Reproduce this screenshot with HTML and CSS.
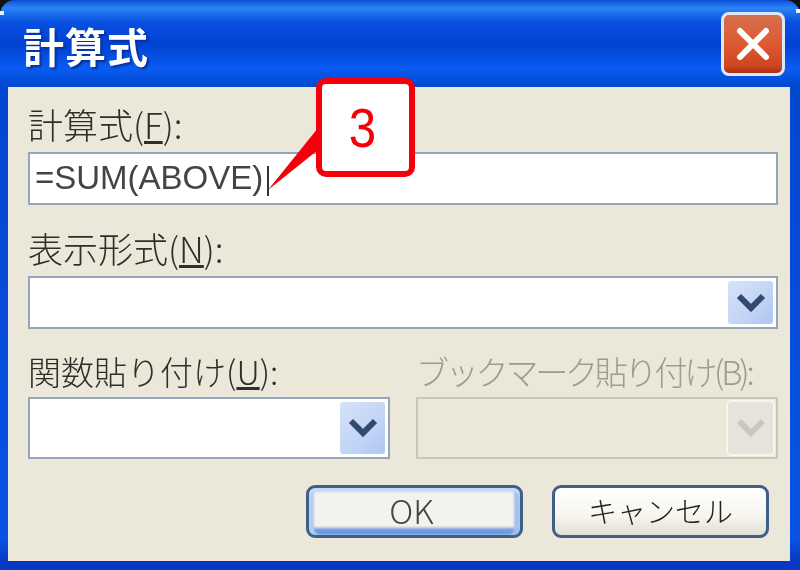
FILE: index.html
```html
<!DOCTYPE html>
<html lang="ja">
<head>
    <meta charset="UTF-8">
    <meta name="viewport" content="width=device-width, initial-scale=1.0">
    <title>計算式</title>
    <link rel="stylesheet" href="styles.css">
</head>
<body>
    <div class="window">
        <div class="titlebar">
            <span class="title">計算式</span>
            <button class="close-button" aria-label="閉じる">
                <svg width="40" height="40" viewBox="0 0 40 40">
                    <path d="M7 7 L33 33 M33 7 L7 33" stroke="#fff" stroke-width="6" stroke-linecap="round" fill="none"/>
                </svg>
            </button>
        </div>

        <div class="client">
            <div class="group formula-group">
                <label class="field-label">計算式(<u>F</u>):</label>
                <div class="field text-field">=SUM(ABOVE)<span class="caret"></span></div>
            </div>

            <div class="group format-group">
                <label class="field-label">表示形式(<u>N</u>):</label>
                <div class="field select-field">
                    <span class="drop-button">
                        <svg width="30" height="20" viewBox="0 0 30 20"><path d="M3 3 L15 15 L27 3" stroke="#34496f" stroke-width="6" fill="none"/></svg>
                    </span>
                </div>
            </div>

            <div class="paste-row">
                <div class="group">
                    <label class="field-label tight">関数貼り付け(<u>U</u>):</label>
                    <div class="field select-field tall">
                        <span class="drop-button">
                            <svg width="30" height="20" viewBox="0 0 30 20"><path d="M3 3 L15 15 L27 3" stroke="#34496f" stroke-width="6" fill="none"/></svg>
                        </span>
                    </div>
                </div>
                <div class="group disabled">
                    <label class="field-label tight">ブックマーク貼り付け(B):</label>
                    <div class="field select-field tall">
                        <span class="drop-button">
                            <svg width="30" height="20" viewBox="0 0 30 20"><path d="M3 3 L15 15 L27 3" stroke="#c9c8be" stroke-width="6" fill="none"/></svg>
                        </span>
                    </div>
                </div>
            </div>

            <div class="button-row">
                <button class="push-button default-button">OK</button>
                <button class="push-button cancel-button">キャンセル</button>
            </div>
        </div>

        <!-- callout marker over the dialog -->
        <div class="callout">
            <svg class="callout-tail" width="60" height="80" viewBox="0 0 60 80">
                <path d="M50 8 L0 70 L50 30 Z" fill="#f5000a"/>
            </svg>
            <span class="callout-number">3</span>
        </div>
    </div>
</body>
</html>
```

FILE: styles.css
```css
html, body {
    margin: 0;
    padding: 0;
}

body {
    width: 800px;
    height: 570px;
    overflow: hidden;
    background-color: #111;
    font-family: "Noto Sans CJK JP", "Liberation Sans", sans-serif;
}

/* the little white specks left in the window corners */
body::before, body::after {
    content: "";
    position: absolute;
    z-index: 1;
    width: 4px;
    height: 4px;
    background-color: #e8eefa;
}

body::before {
    left: 0;
    top: 11px;
}

body::after {
    right: 0;
    top: 9px;
}

.window {
    position: relative;
    width: 800px;
    height: 570px;
    display: flex;
    flex-direction: column;
    border-radius: 15px 15px 0 0;
    background: linear-gradient(to bottom, #0a50d8 0, #2d84f6 8px, #0850e0 22px, #0042d2 45px, #0a5cf2 68px, #0048d0 86px, #0a52e4 540px, #0838c0 562px);
    overflow: hidden;
}

.titlebar {
    height: 87px;
    flex-shrink: 0;
    display: flex;
    align-items: center;
    justify-content: space-between;
    padding: 0 15px 0 23px;
    box-sizing: border-box;
}

.title {
    color: #fff;
    font-size: 41px;
    font-weight: 700;
    letter-spacing: 1px;
    text-shadow: 2px 2px 2px #06309a;
    filter: blur(0.6px);
    padding-top: 2px;
}

.close-button {
    width: 64px;
    height: 64px;
    padding: 0;
    border: 3px solid #dfe6f6;
    border-radius: 8px;
    background: linear-gradient(to bottom, #d4704e 0%, #de5a30 50%, #cc4520 88%, #a83010 100%);
    display: flex;
    align-items: center;
    justify-content: center;
    filter: blur(0.6px);
}

.client {
    flex: 1;
    margin: 0 10px 9px 8px;
    padding: 18px 12px 22px 20px;
    background-color: #ebe8d9;
    display: flex;
    flex-direction: column;
}

.field-label {
    display: block;
    height: 38px;
    margin-bottom: 9px;
    font-size: 35px;
    font-weight: 300;
    line-height: 38px;
    color: #2e2e2a;
    white-space: nowrap;
    filter: blur(0.4px);
}

.field-label.tight {
    margin-bottom: 7px;
    font-size: 33px;
}

.field {
    position: relative;
    box-sizing: border-box;
    height: 53px;
    border: 2px solid #93a6ba;
    background-color: #fff;
}

.text-field {
    padding-left: 5px;
    font-family: "Liberation Sans", sans-serif;
    font-size: 33px;
    line-height: 47px;
    color: #444;
    filter: blur(0.4px);
}

.caret {
    display: inline-block;
    width: 2px;
    height: 30px;
    margin-left: 4px;
    background-color: #333;
    vertical-align: -7px;
}

.formula-group {
    margin-bottom: 24px;
}

.format-group {
    margin-bottom: 23px;
}

.select-field.tall {
    height: 62px;
}

.drop-button {
    position: absolute;
    top: 3px;
    right: 3px;
    bottom: 3px;
    width: 45px;
    display: flex;
    align-items: center;
    justify-content: center;
    border-radius: 3px;
    background: linear-gradient(135deg, #d6e2f8 0%, #c2d4f6 60%, #aec6f2 100%);
    filter: blur(0.4px);
}

.paste-row {
    display: grid;
    grid-template-columns: 362px 362px;
    column-gap: 26px;
}

.disabled .field-label {
    color: #a09c8c;
    letter-spacing: -3.2px;
}

.disabled .field {
    border-color: #c9c7ba;
    background-color: #ebe8d9;
}

.disabled .drop-button {
    background: #e6e4da;
    box-shadow: 0 0 0 2px #f6f5ef;
}

.button-row {
    display: flex;
    justify-content: flex-end;
    gap: 29px;
    margin-top: 26px;
    margin-right: 9px;
}

.push-button {
    box-sizing: border-box;
    width: 217px;
    height: 53px;
    padding: 0 0 3px;
    border: 3px solid #3f5f86;
    border-radius: 9px;
    background: linear-gradient(to bottom, #ffffff 0%, #f6f5ee 60%, #e2dfd2 100%);
    font-family: "Noto Sans CJK JP", "Liberation Sans", sans-serif;
    font-size: 29px;
    font-weight: 300;
    line-height: 44px;
    color: #222;
    filter: blur(0.5px);
}

.default-button {
    padding: 0 6px 6px 0;
    background: #f3f2ec;
    font-size: 33px;
    color: #444;
    box-shadow: inset 0 4px 2px #c4daf8, inset 5px 0 2px #b4cdf2, inset -6px 0 2px #a4c0ee, inset 0 -7px 3px #6e9ae0;
}

.callout {
    position: absolute;
    left: 316px;
    top: 78px;
    width: 99px;
    height: 99px;
    box-sizing: border-box;
    border: 6px solid #f5000a;
    border-radius: 10px;
    background-color: #fff;
    display: flex;
    align-items: center;
    justify-content: center;
}

.callout-tail {
    position: absolute;
    left: -54px;
    top: 36px;
}

.callout-number {
    margin-right: 5px;
    font-family: "Liberation Sans", sans-serif;
    font-size: 56px;
    line-height: 1;
    color: #f5000a;
    transform: scaleX(0.88);
}
```
